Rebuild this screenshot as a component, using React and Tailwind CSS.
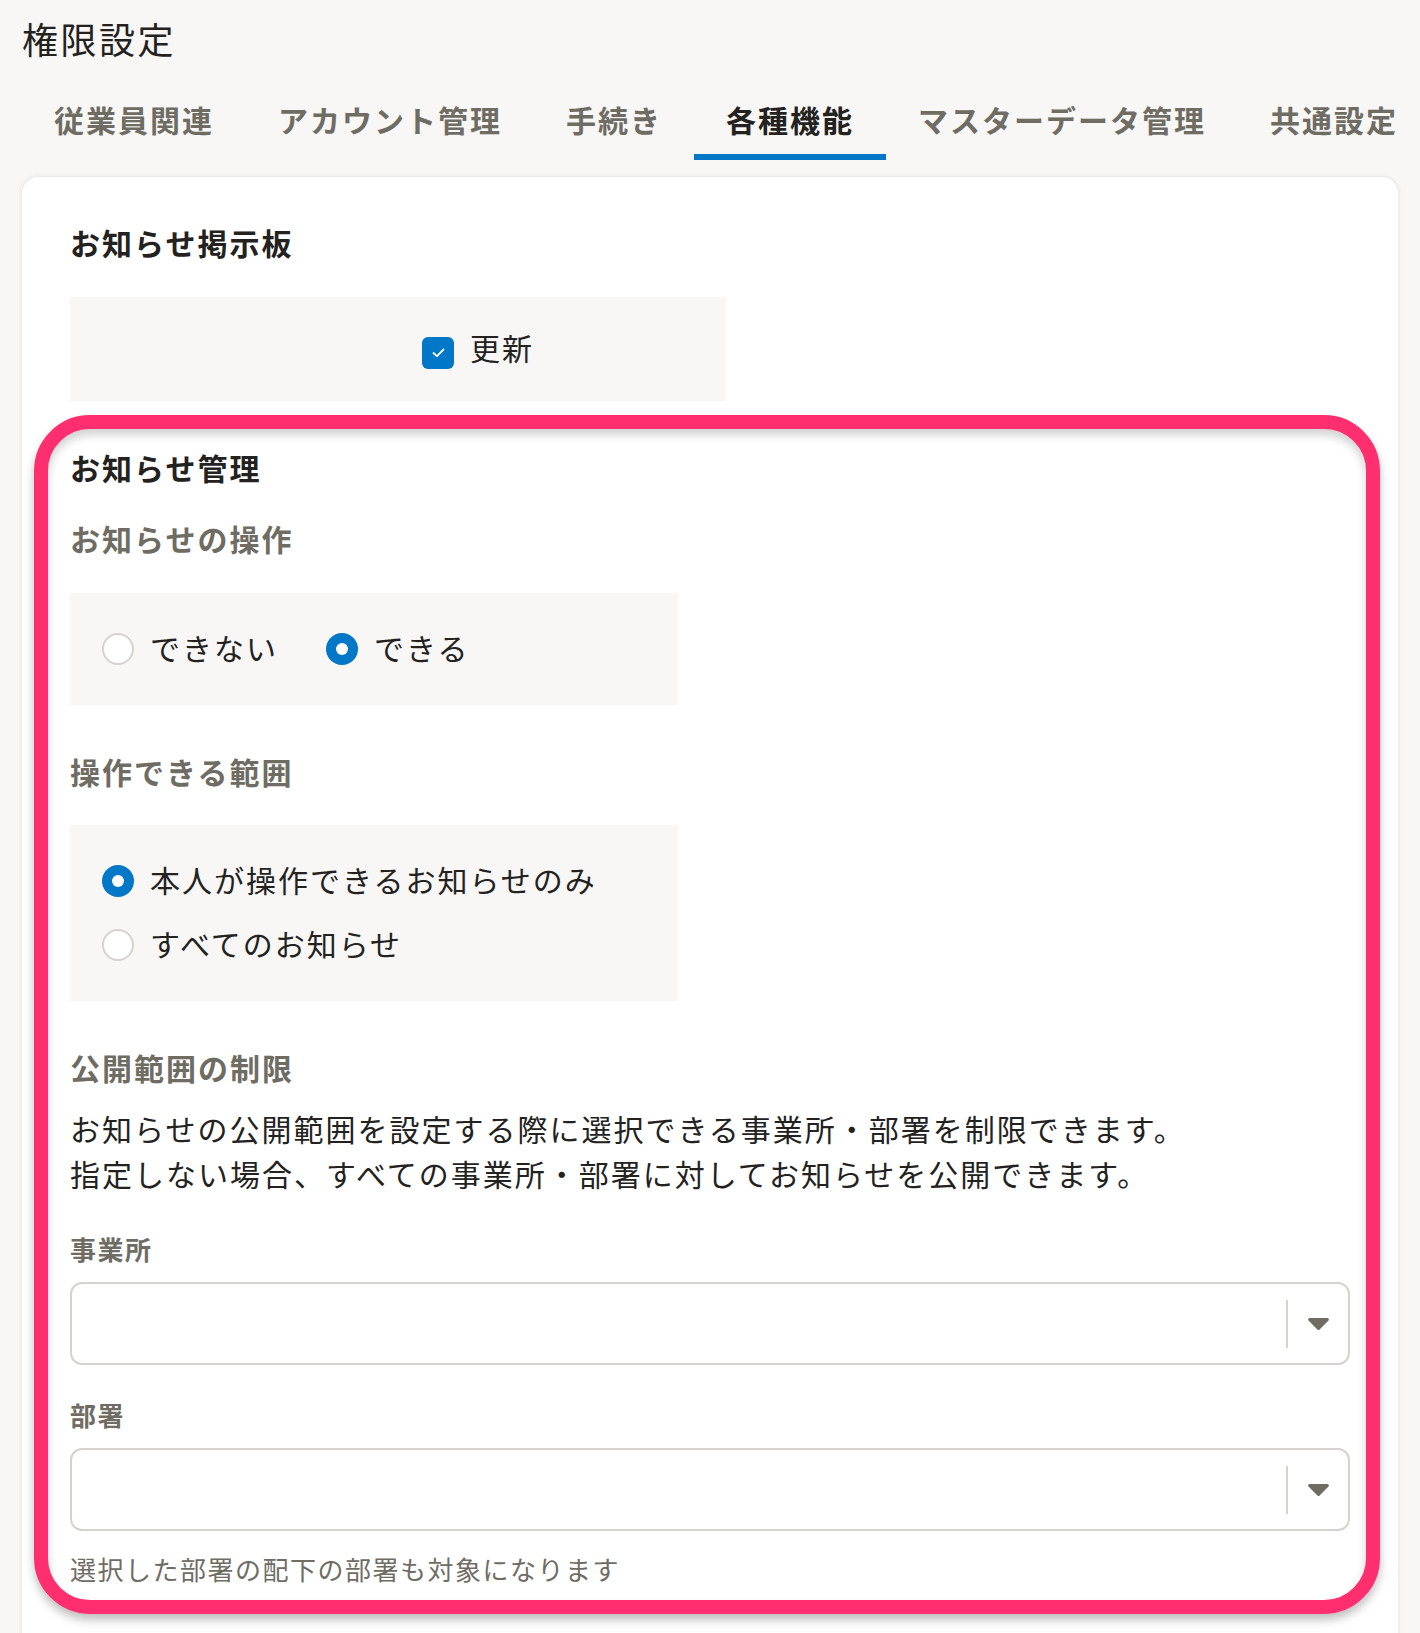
import React from 'react';

const tabs = ['従業員関連', 'アカウント管理', '手続き', '各種機能', 'マスターデータ管理', '共通設定'];

const Radio = ({ checked }) =>
    checked ? (
        <span className="w-8 h-8 shrink-0 rounded-full bg-[#0077c7] flex items-center justify-center">
            <span className="w-3 h-3 rounded-full bg-white"></span>
        </span>
    ) : (
        <span className="w-8 h-8 shrink-0 rounded-full border-2 border-[#d6d3ce] bg-white"></span>
    );

const RadioItem = ({ checked, label }) => (
    <label className="flex items-center gap-4 h-8">
        <Radio checked={checked} />
        <span className="leading-8 mb-1">{label}</span>
    </label>
);

const SelectBox = () => (
    <div className="mt-[14px] h-[83px] w-full rounded-xl border-2 border-[#d6d3ce] bg-white flex items-center">
        <div className="flex-1"></div>
        <div className="w-[2px] h-12 bg-[#d6d3ce]"></div>
        <div className="w-[60px] flex items-center justify-center">
            <svg width="21" height="12" viewBox="0 0 21 12">
                <path
                    d="M1.6 0 H19.4 A1.5 1.5 0 0 1 20.5 2.5 L11.6 11.4 A1.5 1.5 0 0 1 9.4 11.4 L0.5 2.5 A1.5 1.5 0 0 1 1.6 0 Z"
                    fill="#6f6c64"
                />
            </svg>
        </div>
    </div>
);

export default function App() {
    return (
        <div className="h-[1633px] w-[1420px] overflow-hidden bg-[#f8f7f6] font-['Noto_Sans_CJK_JP','Noto_Sans',sans-serif] tracking-[2px] text-[#23221e]">
            <h1 className="px-[22px] pt-[11px] pb-[2px] text-[36px] leading-[54px] font-normal tracking-[2.5px]">権限設定</h1>

            {/* Tabs */}
            <nav className="mt-[30px] flex px-[22px] whitespace-nowrap overflow-hidden">
                {tabs.map((t) => (
                    <div
                        key={t}
                        className={
                            t === '各種機能'
                                ? 'shrink-0 px-8 pb-[12px] border-b-[6px] border-[#0077c7] text-[30px] leading-[45px] font-bold text-[#23221e]'
                                : 'shrink-0 px-8 pb-[12px] border-b-[6px] border-transparent text-[30px] leading-[45px] font-bold text-[#6f6c64]'
                        }
                    >
                        {t}
                    </div>
                ))}
            </nav>

            {/* Card */}
            <div className="mx-[22px] mt-[17px] rounded-2xl bg-white px-12 pt-[43px] pb-[200px] shadow-[0_0_4px_rgba(0,0,0,0.12)]">
                <h2 className="text-[30px] leading-[45px] font-bold">お知らせ掲示板</h2>
                <div className="mt-[32px] w-[656px] bg-[#f8f7f6] pl-[352px] pt-10 pb-8 text-[30px]">
                    <label className="flex items-center gap-4 h-8">
                        <span className="w-8 h-8 rounded-md bg-[#0077c7] flex items-center justify-center">
                            <svg width="13" height="10" viewBox="0 0 13 10" fill="none">
                                <path d="M1.5 5 L5 8.2 L11.5 1.5" stroke="#fff" strokeWidth="1.8" strokeLinecap="round" strokeLinejoin="round" />
                            </svg>
                        </span>
                        <span className="leading-8 mb-3">更新</span>
                    </label>
                </div>

                {/* Highlighted section */}
                <section className="relative pt-[44px] text-[30px]">
                    <h3 className="leading-[45px] font-bold">お知らせ管理</h3>

                    <h4 className="mt-[26px] leading-[45px] font-bold text-[#6f6c64]">お知らせの操作</h4>
                    <div className="mt-[32px] w-[608px] bg-[#f8f7f6] px-8 py-10 flex items-center gap-12">
                        <RadioItem label="できない" />
                        <RadioItem checked label="できる" />
                    </div>

                    <h4 className="mt-[44px] leading-[45px] font-bold text-[#6f6c64]">操作できる範囲</h4>
                    <div className="mt-[31px] w-[608px] bg-[#f8f7f6] px-8 py-10 flex flex-col gap-8">
                        <RadioItem checked label="本人が操作できるお知らせのみ" />
                        <RadioItem label="すべてのお知らせ" />
                    </div>

                    <h4 className="mt-[44px] leading-[45px] font-bold text-[#6f6c64]">公開範囲の制限</h4>
                    <p className="mt-4 leading-[45px]">
                        お知らせの公開範囲を設定する際に選択できる事業所・部署を制限できます。
                        <br />
                        指定しない場合、すべての事業所・部署に対してお知らせを公開できます。
                    </p>

                    <div className="mt-[33px] text-[26px] leading-[39px] font-bold text-[#6f6c64] tracking-[1.5px]">事業所</div>
                    <SelectBox />

                    <div className="mt-[30px] text-[26px] leading-[39px] font-bold text-[#6f6c64] tracking-[1.5px]">部署</div>
                    <SelectBox />

                    <p className="mt-[18px] text-[26px] leading-[39px] text-[#6f6c64] tracking-[1.5px]">選択した部署の配下の部署も対象になります</p>

                    {/* pink annotation frame */}
                    <div className="pointer-events-none absolute -left-[36px] -right-[30px] top-[14px] -bottom-[26px] rounded-[56px] border-[14px] border-[#ff2e6e] shadow-[0_6px_10px_rgba(0,0,0,0.25),inset_0_6px_10px_rgba(0,0,0,0.18)]"></div>
                </section>
            </div>
        </div>
    );
}
